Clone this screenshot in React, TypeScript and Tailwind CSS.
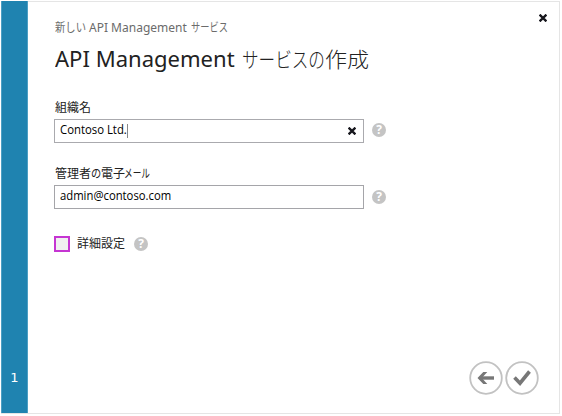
import type { ReactNode } from "react";

function Run({ box, fit = "", children }: { box: string; fit?: string; children: ReactNode }) {
  return (
    <span className={`block shrink-0 whitespace-pre ${box}`}>
      <span className={`inline-block origin-left ${fit}`}>{children}</span>
    </span>
  );
}

function Cross() {
  return (
    <svg width="8" height="8" viewBox="0 0 8 8" className="shrink-0" aria-hidden="true">
      <path d="M0.6 0.6 7.4 7.4M7.4 0.6 0.6 7.4" stroke="#16161c" strokeWidth="2.3" />
    </svg>
  );
}

function Help() {
  return (
    <span className="flex size-[14px] shrink-0 items-center justify-center rounded-full bg-[#c4c4c4] font-['Open_Sans','Noto_Sans',sans-serif] text-[12px] leading-[14px] font-bold text-white">
      ?
    </span>
  );
}

export default function App() {
  return (
    <div className="h-[416px] w-[562px] bg-white pt-px pl-px font-['Noto_Sans','Noto_Sans_CJK_JP',sans-serif] text-[#222]">
      <div className="flex h-[413px] w-[559px] border-r border-b border-[#e5e5e5]">
        <aside className="flex w-[27px] shrink-0 flex-col justify-end border-x border-[#4c9fc4] bg-[#1f83b0] pb-[26px] text-center font-['DejaVu_Sans',sans-serif] text-[13px] leading-[18px] text-white">
          1
        </aside>
        <main className="flex min-w-0 flex-1 flex-col border-t border-[#e5e5e5] pl-[26px]">
          <div className="flex h-[37px] justify-between pt-[12px] pr-[12px]">
            <div className="flex pt-[5px] pl-px text-[12px] leading-[18px] text-[#6b6b6b]">
              <Run box="w-[34px]" fit="scale-x-[0.86]">新しい</Run>
              <Run box="w-[102px]">API Management</Run>
              <Run box="w-[38px]" fit="scale-x-[0.77]">サービス</Run>
            </div>
            <Cross />
          </div>
          <h1 className="mt-[5px] flex h-[30px] pl-px text-[21px] leading-[30px]">
            <Run box="w-[187px]" fit="scale-x-[1.05]">API Management</Run>
            <Run box="w-[83px] font-light" fit="scale-x-[0.79]">サービスの</Run>
            <Run box="w-[46px] font-light" fit="scale-x-[1.05]">作成</Run>
          </h1>
          <div className="mt-[25px] h-[18px] pl-px text-[12px] leading-[18px]">組織名</div>
          <div className="mt-[2px] flex items-center gap-[8px]">
            <div className="flex h-[24px] w-[310px] items-center border border-[#aaaaae] pr-[7px] pl-[5px] font-['Open_Sans','Noto_Sans',sans-serif] text-[12px] leading-[18px] text-black">
              <div className="pb-[3px]">
                <Run box="w-[67px]" fit="scale-x-[0.945]">Contoso Ltd.</Run>
              </div>
              <span className="h-[14px] w-px bg-[#888]" />
              <span className="flex-1" />
              <div className="pb-px">
                <Cross />
              </div>
            </div>
            <div className="-mt-[2px]">
              <Help />
            </div>
          </div>
          <div className="mt-[22px] flex h-[18px] pl-px text-[12px] leading-[18px]">
            <Run box="w-[36px]">管理者</Run>
            <Run box="w-[10px]" fit="scale-x-[0.85]">の</Run>
            <Run box="w-[23px]">電子</Run>
            <Run box="w-[26px]" fit="scale-x-[0.72]">メール</Run>
          </div>
          <div className="mt-[2px] flex items-center gap-[8px]">
            <div className="flex h-[24px] w-[310px] items-center border border-[#a5a5a9] pb-[3px] pl-[5px] font-['Open_Sans','Noto_Sans',sans-serif] text-[12px] leading-[18px] text-black">
              <Run box="w-[114px]" fit="scale-x-[0.94]">admin@contoso.com</Run>
            </div>
            <Help />
          </div>
          <div className="mt-[25px] flex items-center text-[12px] leading-[18px]">
            <span className="size-[16px] border-2 border-[#c535d2] bg-[#f0f0f0]" />
            <span className="ml-[7px] w-[57px] pt-px">詳細設定</span>
            <Help />
          </div>
          <div className="mt-auto mb-[18px] flex justify-end gap-[2px] pr-[20px]">
            <svg width="34" height="34" viewBox="0 0 34 34" aria-hidden="true">
              <circle cx="17" cy="17" r="15.8" fill="white" stroke="#c2c2c2" strokeWidth="1.8" />
              <path d="M25 17H11" stroke="#777" strokeWidth="3.4" />
              <path d="M8.5 17 14.3 11h4L12.8 17l5.5 6h-4Z" fill="#777" />
            </svg>
            <svg width="34" height="34" viewBox="0 0 34 34" aria-hidden="true">
              <circle cx="17" cy="17" r="15.8" fill="white" stroke="#c2c2c2" strokeWidth="1.8" />
              <path d="M9.5 16.5 15 22.2 24.5 10.5" fill="none" stroke="#777" strokeWidth="3.6" />
            </svg>
          </div>
        </main>
      </div>
    </div>
  );
}
